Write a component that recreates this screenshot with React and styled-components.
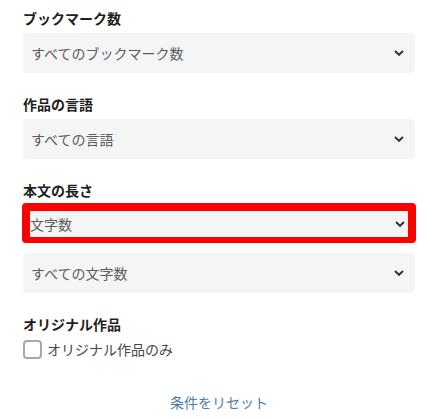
import React from 'react';
import styled, { createGlobalStyle } from 'styled-components';

const Global = createGlobalStyle`
    body {
        margin: 0;
        background: #fff;
        font-family: "Noto Sans CJK JP", "Noto Sans", sans-serif;
    }
`;

const Page = styled.div`
    width: 392px;
    padding: 8px 23px 0;
    display: flex;
    flex-direction: column;
`;

const Section = styled.div`
    display: flex;
    flex-direction: column;
    gap: 4px;
    margin-bottom: ${p => p.$after || 0}px;
`;

const Heading = styled.div`
    font-size: 14px;
    line-height: 21px;
    font-weight: bold;
    color: #1f1f1f;
`;

const Select = styled.div`
    height: 40px;
    box-sizing: border-box;
    display: flex;
    align-items: center;
    justify-content: space-between;
    padding: 0 11px 0 8px;
    margin-top: ${p => p.$top || 0}px;
    border-radius: 4px;
    background: #f5f5f5;
    font-size: 14px;
    color: #5c5c5c;
    ${p => p.$marked && `
        border: 8px solid #ff0000;
        border-bottom-width: 6px;
        padding: 0 3px 0 0;
        margin: -2px -1px 2px;
    `}
`;

const Chevron = () => (
    <svg width="10" height="6" viewBox="0 0 10 6">
        <path d="M1 1 L5 4.8 L9 1" fill="none" stroke="#333" strokeWidth="2" />
    </svg>
);

const CheckRow = styled.label`
    display: flex;
    align-items: center;
    gap: 5px;
    font-size: 14px;
    line-height: 20px;
    color: #474747;
`;

const Box = styled.span`
    width: 19px;
    height: 19px;
    box-sizing: border-box;
    border: 2px solid #a8a8a8;
    border-radius: 4px;
`;

const Reset = styled.div`
    margin-top: 33px;
    text-align: center;
    font-size: 14px;
    line-height: 20px;
    color: #4a7ea6;
`;

const App = () => {
    return (
        <>
            <Global />
            <Page>
                <Section $after={21}>
                    <Heading>ブックマーク数</Heading>
                    <Select>すべてのブックマーク数<Chevron /></Select>
                </Section>
                <Section $after={21}>
                    <Heading>作品の言語</Heading>
                    <Select>すべての言語<Chevron /></Select>
                </Section>
                <Section $after={21}>
                    <Heading>本文の長さ</Heading>
                    <Select $marked>文字数<Chevron /></Select>
                    <Select $top={4}>すべての文字数<Chevron /></Select>
                </Section>
                <Section>
                    <Heading>オリジナル作品</Heading>
                    <CheckRow><Box />オリジナル作品のみ</CheckRow>
                </Section>
                <Reset>条件をリセット</Reset>
            </Page>
        </>
    );
};

export default App;
